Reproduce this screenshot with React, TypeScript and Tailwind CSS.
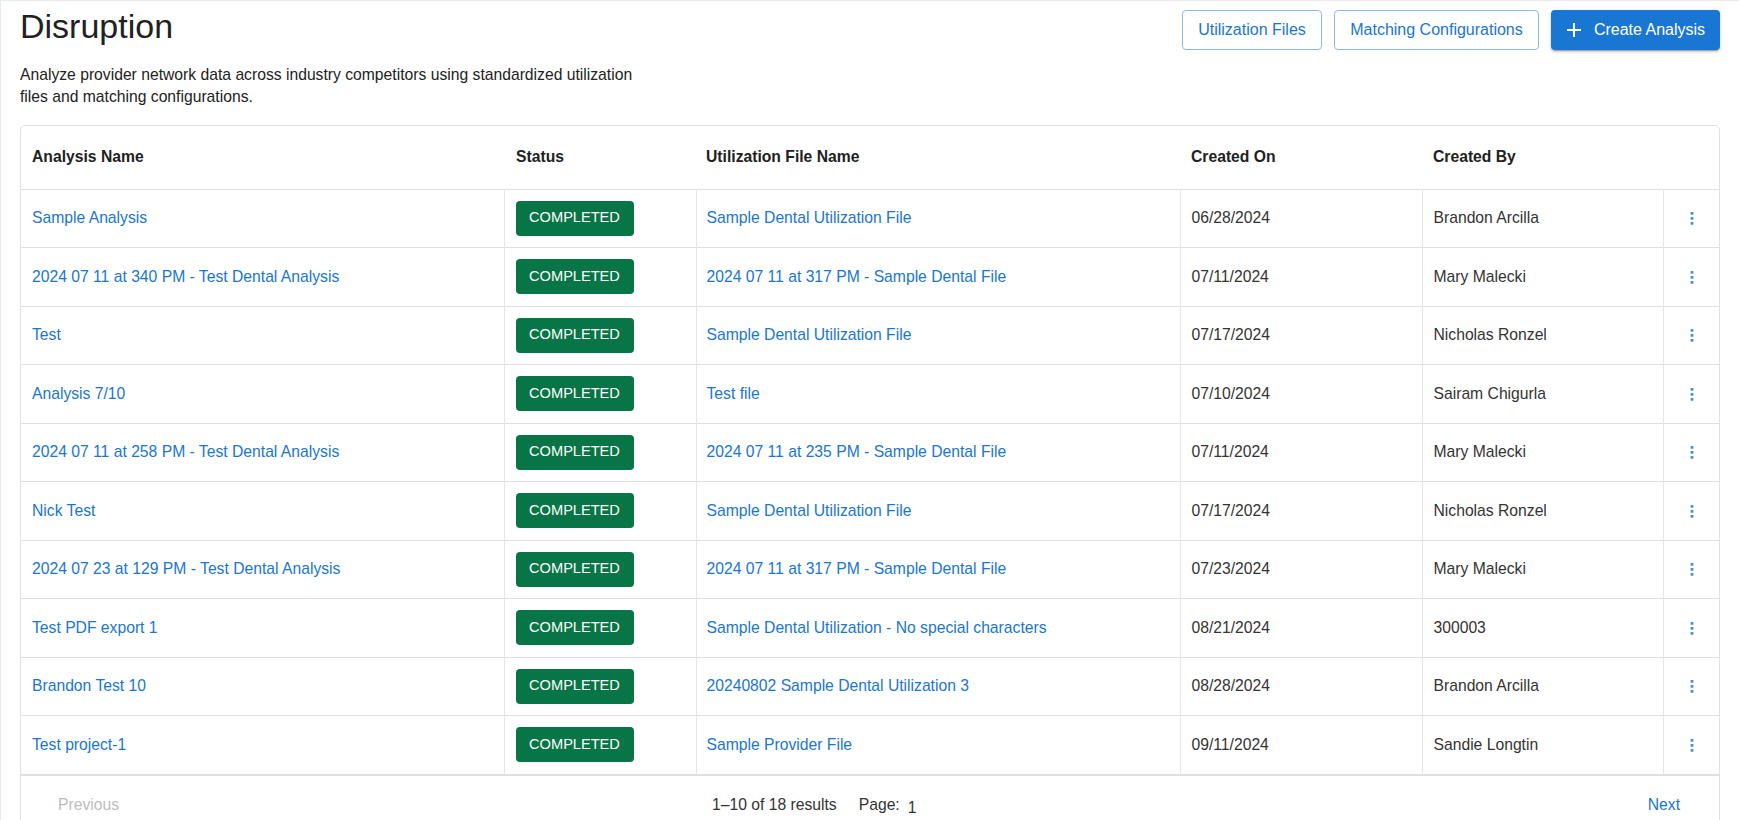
import React from 'react';

type Row = {
  name: string;
  file: string;
  created: string;
  by: string;
};

const rows: Row[] = [
  { name: 'Sample Analysis', file: 'Sample Dental Utilization File', created: '06/28/2024', by: 'Brandon Arcilla' },
  { name: '2024 07 11 at 340 PM - Test Dental Analysis', file: '2024 07 11 at 317 PM - Sample Dental File', created: '07/11/2024', by: 'Mary Malecki' },
  { name: 'Test', file: 'Sample Dental Utilization File', created: '07/17/2024', by: 'Nicholas Ronzel' },
  { name: 'Analysis 7/10', file: 'Test file', created: '07/10/2024', by: 'Sairam Chigurla' },
  { name: '2024 07 11 at 258 PM - Test Dental Analysis', file: '2024 07 11 at 235 PM - Sample Dental File', created: '07/11/2024', by: 'Mary Malecki' },
  { name: 'Nick Test', file: 'Sample Dental Utilization File', created: '07/17/2024', by: 'Nicholas Ronzel' },
  { name: '2024 07 23 at 129 PM - Test Dental Analysis', file: '2024 07 11 at 317 PM - Sample Dental File', created: '07/23/2024', by: 'Mary Malecki' },
  { name: 'Test PDF export 1', file: 'Sample Dental Utilization - No special characters', created: '08/21/2024', by: '300003' },
  { name: 'Brandon Test 10', file: '20240802 Sample Dental Utilization 3', created: '08/28/2024', by: 'Brandon Arcilla' },
  { name: 'Test project-1', file: 'Sample Provider File', created: '09/11/2024', by: 'Sandie Longtin' },
];

function PlusIcon() {
  return (
    <svg viewBox="0 0 24 24" className="h-[24px] w-[24px] fill-white">
      <path d="M19 13h-6v6h-2v-6H5v-2h6V5h2v6h6z" />
    </svg>
  );
}

function KebabIcon() {
  return (
    <svg viewBox="0 0 6 16" className="h-[16px] w-[6px] fill-[#4a90d9]">
      <rect x="1.6" y="2" width="2.8" height="2.8" rx="0.6" />
      <rect x="1.6" y="7" width="2.8" height="2.8" rx="0.6" />
      <rect x="1.6" y="12" width="2.8" height="2.8" rx="0.6" />
    </svg>
  );
}

export default function App(): JSX.Element {
  return (
    <div className="min-h-[820px] border-t border-l border-[#e6ebf0] bg-white px-[19px] pt-[4px] font-['Liberation_Sans',Arial,sans-serif] text-[#212121]">
      <div className="flex items-start justify-between">
        <div>
          <h1 className="text-[34px] leading-[42px] font-normal text-[#212121]">Disruption</h1>
          <p className="mt-[17px] max-w-[640px] text-[15.7px] leading-[22px] text-[#222]">
            Analyze provider network data across industry competitors using standardized utilization files and matching configurations.
          </p>
        </div>
        <div className="mt-[5px] flex gap-[12px]">
          <button
            type="button"
            className="h-[40px] w-[140px] rounded-[4px] border border-[#8cbae8] bg-white text-[16px] text-[#1976d2]"
          >
            Utilization Files
          </button>
          <button
            type="button"
            className="h-[40px] w-[205px] rounded-[4px] border border-[#8cbae8] bg-white text-[16px] text-[#1976d2]"
          >
            Matching Configurations
          </button>
          <button
            type="button"
            className="flex h-[40px] w-[169px] items-center justify-center gap-[8px] rounded-[4px] bg-[#1976d2] pr-[4px] text-[16px] text-white shadow-[0_3px_1px_-2px_rgba(0,0,0,0.2),0_2px_2px_0_rgba(0,0,0,0.14),0_1px_5px_0_rgba(0,0,0,0.12)]"
          >
            <PlusIcon />
            Create Analysis
          </button>
        </div>
      </div>

      <div className="mt-[17px] overflow-hidden rounded-[5px] border border-[#e0e0e0]">
        <table className="w-full table-fixed border-collapse text-[15.7px]">
          <colgroup>
            <col className="w-[483px]" />
            <col className="w-[192px]" />
            <col className="w-[484px]" />
            <col className="w-[242px]" />
            <col className="w-[241px]" />
            <col className="w-[58px]" />
          </colgroup>
          <thead>
            <tr className="h-[63px] border-b border-[#e0e0e0]">
              <th className="px-[11px] text-left font-bold">Analysis Name</th>
              <th className="px-[12px] text-left font-bold">Status</th>
              <th className="px-[10px] text-left font-bold">Utilization File Name</th>
              <th className="px-[11px] text-left font-bold">Created On</th>
              <th className="px-[11px] text-left font-bold">Created By</th>
              <th />
            </tr>
          </thead>
          <tbody>
            {rows.map((row, i) => (
              <tr key={i} className="h-[58.5px] border-b border-[#e0e0e0]">
                <td className="border-r border-[#e6e6e6] px-[11px] text-[#1976d2]">{row.name}</td>
                <td className="border-r border-[#e6e6e6] px-[11px]">
                  <span className="inline-flex h-[35px] w-[118px] items-center justify-center rounded-[4px] bg-[#087546] text-[14.6px] text-white">
                    COMPLETED
                  </span>
                </td>
                <td className="border-r border-[#e6e6e6] px-[10px] text-[#1976d2]">{row.file}</td>
                <td className="border-r border-[#e6e6e6] px-[11px] text-[#333]">{row.created}</td>
                <td className="border-r border-[#e6e6e6] px-[11px] text-[#333]">{row.by}</td>
                <td>
                  <div className="flex justify-center">
                    <KebabIcon />
                  </div>
                </td>
              </tr>
            ))}
          </tbody>
        </table>
        <div className="flex h-[60px] items-center border-t border-[#e0e0e0] text-[15.7px]">
          <div className="w-[691px] pl-[37px] text-[#bdbdbd]">Previous</div>
          <span className="text-[#333]">1–10 of 18 results</span>
          <span className="ml-[22px] text-[#333]">Page:</span>
          <span className="mt-[6px] ml-[8px] text-[#333]">1</span>
          <div className="flex-1" />
          <span className="pr-[39px] text-[#1976d2]">Next</span>
        </div>
      </div>
    </div>
  );
}
